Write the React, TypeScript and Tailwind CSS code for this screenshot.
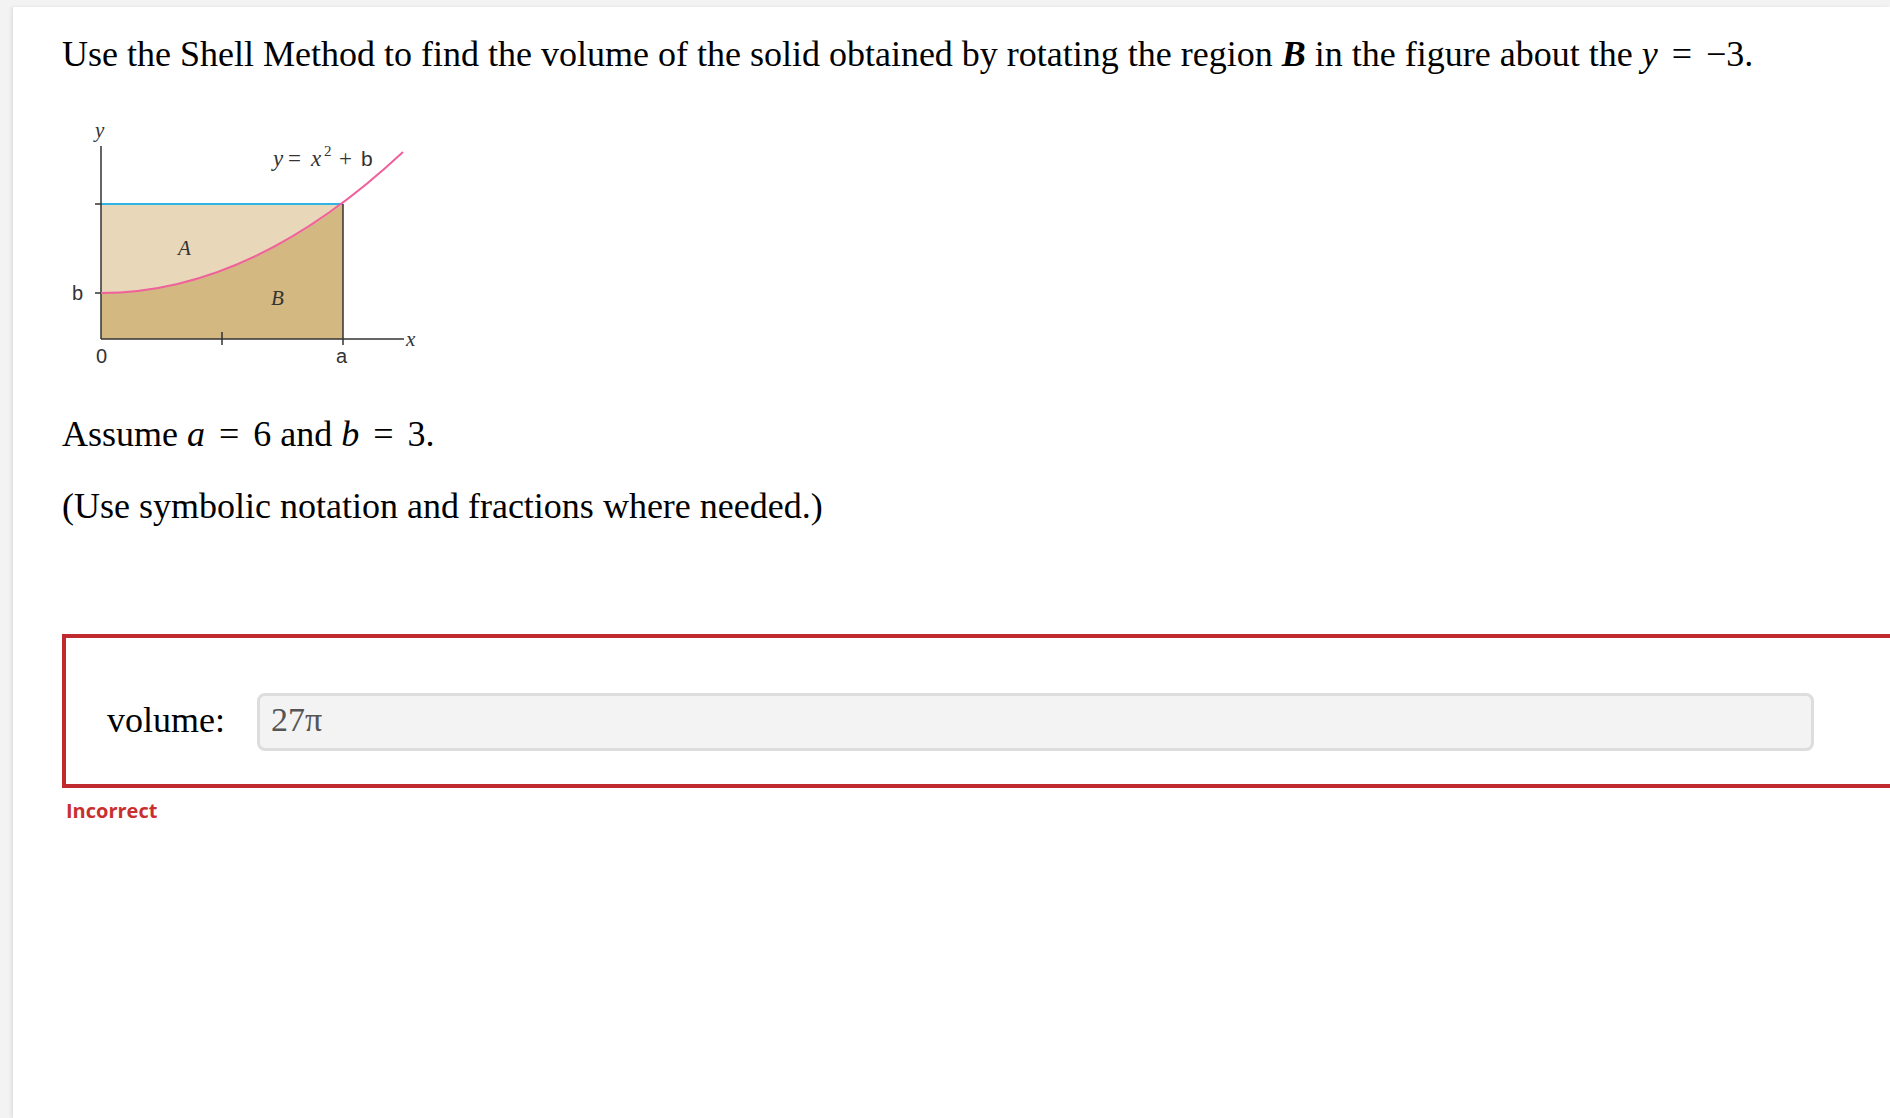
import React from 'react'

const serif = { fontFamily: '"Liberation Serif", "Times New Roman", serif' }
const sans = '"Liberation Sans", Arial, sans-serif'

function Eq() {
  return <span className="mx-[5px]">=</span>
}

function Figure() {
  // parabola y = x^2 + b drawn in screen coords
  const ink = '#333333'
  return (
    <svg width="380" height="255" viewBox="62 115 380 255" className="block">
      {/* region A */}
      <path d="M101 204 L343 204 Q222 293 101 293 Z" fill="#e8d8b9" />
      {/* region B */}
      <path d="M101 293 Q222 293 343 204 L343 339 L101 339 Z" fill="#d4b881" />
      {/* top line */}
      <line x1="101" y1="204" x2="343" y2="204" stroke="#2fb4e4" strokeWidth="2" />
      {/* axes */}
      <line x1="101" y1="146" x2="101" y2="339" stroke={ink} strokeWidth="1.5" />
      <line x1="101" y1="339" x2="404" y2="339" stroke={ink} strokeWidth="1.5" />
      <line x1="343" y1="204" x2="343" y2="339" stroke={ink} strokeWidth="1.5" />
      {/* ticks */}
      <line x1="95" y1="204" x2="101" y2="204" stroke={ink} strokeWidth="1.5" />
      <line x1="95" y1="293" x2="101" y2="293" stroke={ink} strokeWidth="1.5" />
      <line x1="222" y1="332" x2="222" y2="345" stroke={ink} strokeWidth="1.5" />
      <line x1="343" y1="339" x2="343" y2="345" stroke={ink} strokeWidth="1.5" />
      {/* curve */}
      <path d="M101 293 Q252 293 403 152" fill="none" stroke="#f0609b" strokeWidth="2" />
      {/* labels */}
      <g fill={ink} fontFamily='"Liberation Serif", "Times New Roman", serif' fontStyle="italic" fontSize="21">
        <text x="95" y="137">y</text>
        <text x="178" y="255">A</text>
        <text x="271" y="305">B</text>
        <text x="406" y="346">x</text>
        <text y="166" fontSize="23">
          <tspan x="273">y</tspan>
          <tspan x="288" fontStyle="normal">=</tspan>
          <tspan x="311">x</tspan>
          <tspan x="324" fontStyle="normal" fontSize="15" dy="-10">2</tspan>
          <tspan x="339" fontStyle="normal" dy="10">+</tspan>
          <tspan x="361" fontStyle="normal" fontFamily={sans} fontSize="21">b</tspan>
        </text>
      </g>
      <g fill={ink} fontFamily={sans} fontSize="20">
        <text x="72" y="300">b</text>
        <text x="96" y="363">0</text>
        <text x="336" y="363">a</text>
      </g>
    </svg>
  )
}

export default function App() {
  return (
    <div className="min-h-screen bg-[#f3f3f3] pl-[13px] pt-[7px]">
      <div
        className="min-h-[1111px] bg-white pl-[49px] pt-[25px] text-black shadow-[-2px_0_3px_rgba(0,0,0,0.08)]"
        style={serif}
      >
        <p className="text-[36px] leading-[44px] whitespace-nowrap">
          Use the Shell Method to find the volume of the solid obtained by rotating the region{' '}
          <b className="italic">B</b> in the figure about the <i>y</i> <Eq /> −3.
        </p>

        <div className="mt-[39px]">
          <Figure />
        </div>

        <p className="mt-[42px] text-[36px] leading-[44px]">
          Assume <i>a</i> <Eq /> 6 and <i>b</i> <Eq /> 3.
        </p>

        <p className="mt-[28px] text-[36px] leading-[44px]">
          (Use symbolic notation and fractions where needed.)
        </p>

        <div className="mt-[106px] flex items-start border-y-4 border-l-4 border-[#c0292d] pb-[33px] pl-[41px] pt-[55px]">
          <span className="mt-[5px] w-[150px] text-[36px] leading-[44px]">volume:</span>
          <div className="h-[58px] w-[1557px] rounded-[8px] border-[3px] border-[#dddddd] bg-[#f3f3f3] pl-[11px] pt-[2px] text-[34px] leading-[44px] text-[#555555]">
            27π
          </div>
        </div>

        <p
          className="ml-[4px] mt-[9px] text-[20px] font-bold leading-[28px] text-[#c8302f]"
          style={{ fontFamily: '"Open Sans", "Noto Sans", sans-serif' }}
        >
          Incorrect
        </p>
      </div>
    </div>
  )
}
